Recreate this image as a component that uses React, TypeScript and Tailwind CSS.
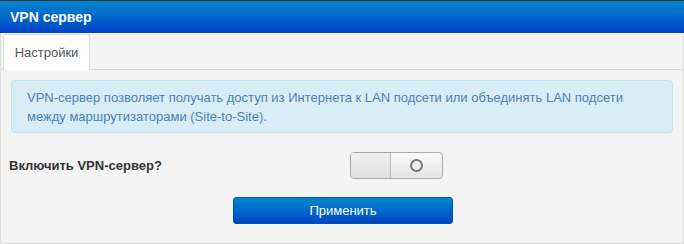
import React from 'react';

const App: React.FC = () => {
  const [enabled, setEnabled] = React.useState(false);

  return (
    <div
      className="w-[684px] h-[244px] bg-[#f4f4f4] flex flex-col overflow-hidden"
      style={{ fontFamily: '"Liberation Sans", Arial, sans-serif' }}
    >
      <div className="h-px bg-[#333]" />
      <div className="h-[32px] bg-gradient-to-b from-[#0085cc] to-[#0040c8] flex items-center px-[10px]">
        <h1 className="text-white text-[14px] font-bold">VPN сервер</h1>
      </div>

      <div className="flex-1 flex flex-col border-l border-r border-b border-[#ddd]">
        <div className="flex pl-[2px] pt-[1px] border-b border-[#ddd] h-[37px]">
          <div className="w-[87px] h-[36px] bg-white border border-[#ddd] border-b-0 rounded-t-[3px] flex items-center justify-center text-[13px] text-[#555] -mb-px">
            Настройки
          </div>
        </div>

        <div className="px-[10px] pt-[10px]">
          <div className="bg-[#d9edf7] border border-[#bce8f1] rounded-[4px] px-[15px] pt-[7px] pb-[6px] text-[13px] leading-[19px] text-[#4a82b4]">
            VPN-сервер позволяет получать доступ из Интернета к LAN подсети или объединять LAN подсети
            <br />
            между маршрутизаторами (Site-to-Site).
          </div>
        </div>

        <div className="flex items-center mt-[19px] h-[27px]">
          <span className="pl-[8px] w-[349px] text-[13px] font-bold text-[#333]">Включить VPN-сервер?</span>
          <button
            onClick={() => setEnabled(!enabled)}
            className="w-[93px] h-[27px] rounded-[4px] border border-[#aaa] bg-gradient-to-b from-[#fafafa] to-[#e4e4e4] flex overflow-hidden"
          >
            <span className="w-[40px] h-full border-r border-[#bbb] bg-gradient-to-b from-[#f0f0f0] to-[#e0e0e0]" />
            <span className="flex-1 h-full flex items-center justify-center">
              <span className="w-[13px] h-[13px] rounded-full border-2 border-[#777]" />
            </span>
          </button>
        </div>

        <div className="flex mt-[18px] pl-[232px]">
          <button className="w-[220px] h-[27px] rounded-[3px] border border-[#0050b8] bg-gradient-to-b from-[#0087cc] to-[#0044c4] text-white text-[13px]">
            Применить
          </button>
        </div>
      </div>
    </div>
  );
};

export default App;
